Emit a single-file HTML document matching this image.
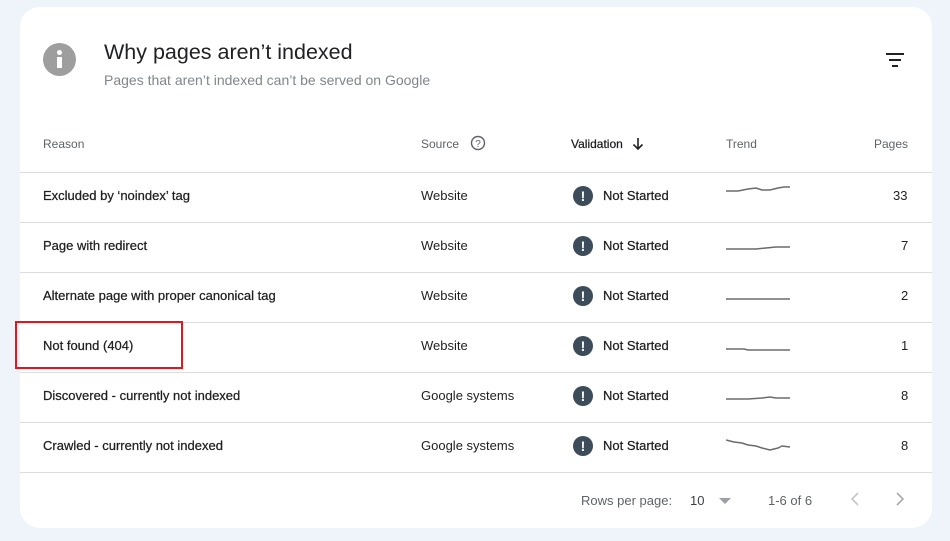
<!DOCTYPE html>
<html><head><style>
body{margin:0;width:950px;height:541px;background:#eff3fa;font-family:"Liberation Sans",Arial,sans-serif;position:relative;overflow:hidden}
.card{position:absolute;left:20px;top:7px;width:912px;height:521px;background:#fff;border-radius:20px}
.a{position:absolute;white-space:nowrap}
.t{font-size:13px;color:#1f1f1f;-webkit-text-stroke:0.25px #1f1f1f}
.h{font-size:12px;color:#5f6368}
.line{position:absolute;left:20px;width:912px;height:1px;background:#dadce0}
.ex{position:absolute;width:20px;height:20px;border-radius:50%;background:#3c4c5a;color:#fff;font-weight:bold;font-size:14px;text-align:center;line-height:20px}
</style></head><body>
<div class="card"></div>
<div class="a" style="left:43px;top:43px;width:33px;height:33px;border-radius:50%;background:#9e9e9e"></div>
<div class="a" style="left:57px;top:50px;width:5px;height:5px;background:#fff;border-radius:50%"></div>
<div class="a" style="left:57px;top:57px;width:5px;height:11px;background:#fff"></div>
<div class="a" style="left:104px;top:40px;font-size:21.5px;color:#202124">Why pages aren’t indexed</div>
<div class="a" style="left:104px;top:72px;font-size:14px;color:#80868b">Pages that aren’t indexed can’t be served on Google</div>
<svg class="a" style="left:885px;top:52px" width="20" height="16"><path d="M1 2h18M4 8h12M7 14h6" stroke="#202124" stroke-width="2"/></svg>
<div class="a h" style="left:43px;top:137px">Reason</div>
<div class="a h" style="left:421px;top:137px">Source</div>
<svg class="a" style="left:470px;top:135px" width="16" height="16"><circle cx="8" cy="8" r="6.5" fill="none" stroke="#5f6368" stroke-width="1.4"/><text x="8" y="12" font-size="10" text-anchor="middle" fill="#5f6368" font-family="Liberation Sans">?</text></svg>
<div class="a" style="left:571px;top:137px;font-size:12px;color:#202124;-webkit-text-stroke:0.25px #202124">Validation</div>
<svg class="a" style="left:632px;top:137px" width="12" height="14"><path d="M6 1v11M1.5 7.5L6 12l4.5-4.5" fill="none" stroke="#202124" stroke-width="1.6"/></svg>
<div class="a h" style="left:726px;top:137px">Trend</div>
<div class="a h" style="left:874px;top:137px">Pages</div>
<div class="line" style="top:172px"></div>
<div class="line" style="top:222px"></div>
<div class="line" style="top:272px"></div>
<div class="line" style="top:322px"></div>
<div class="line" style="top:372px"></div>
<div class="line" style="top:422px"></div>
<div class="line" style="top:472px"></div>

<div class="a t" style="left:43px;top:188px">Excluded by ‘noindex’ tag</div>
<div class="a t" style="left:43px;top:238px">Page with redirect</div>
<div class="a t" style="left:43px;top:288px">Alternate page with proper canonical tag</div>
<div class="a t" style="left:43px;top:338px">Not found (404)</div>
<div class="a t" style="left:43px;top:388px">Discovered - currently not indexed</div>
<div class="a t" style="left:43px;top:438px">Crawled - currently not indexed</div>

<div class="a t" style="left:421px;top:188px;-webkit-text-stroke:0">Website</div>
<div class="a t" style="left:421px;top:238px;-webkit-text-stroke:0">Website</div>
<div class="a t" style="left:421px;top:288px;-webkit-text-stroke:0">Website</div>
<div class="a t" style="left:421px;top:338px;-webkit-text-stroke:0">Website</div>
<div class="a t" style="left:421px;top:388px;-webkit-text-stroke:0">Google systems</div>
<div class="a t" style="left:421px;top:438px;-webkit-text-stroke:0">Google systems</div>

<div class="ex" style="left:573px;top:186px">!</div><div class="a t" style="left:603px;top:188px">Not Started</div>
<div class="ex" style="left:573px;top:236px">!</div><div class="a t" style="left:603px;top:238px">Not Started</div>
<div class="ex" style="left:573px;top:286px">!</div><div class="a t" style="left:603px;top:288px">Not Started</div>
<div class="ex" style="left:573px;top:336px">!</div><div class="a t" style="left:603px;top:338px">Not Started</div>
<div class="ex" style="left:573px;top:386px">!</div><div class="a t" style="left:603px;top:388px">Not Started</div>
<div class="ex" style="left:573px;top:436px">!</div><div class="a t" style="left:603px;top:438px">Not Started</div>

<svg class="a" style="left:726px;top:180px" width="65" height="280" fill="none" stroke="#6b6b6b" stroke-width="1.5">
<path d="M0 11 L12 11 L22 9 L30 8 L36 10 L44 10 L52 8 L58 7 L64 7"/>
<path d="M0 69 L30 69 L40 68 L50 67 L64 67"/>
<path d="M0 119 L64 119"/>
<path d="M0 169 L18 169 L22 170 L64 170"/>
<path d="M0 219 L22 219 L36 218 L44 217 L50 218 L64 218"/>
<path d="M0 260 L8 262 L16 263 L22 265 L30 266 L36 268 L44 270 L52 268 L56 266 L64 267"/>
</svg>

<div class="a t" style="left:893px;top:188px;-webkit-text-stroke:0">33</div>
<div class="a t" style="left:901px;top:238px;-webkit-text-stroke:0">7</div>
<div class="a t" style="left:901px;top:288px;-webkit-text-stroke:0">2</div>
<div class="a t" style="left:901px;top:338px;-webkit-text-stroke:0">1</div>
<div class="a t" style="left:901px;top:388px;-webkit-text-stroke:0">8</div>
<div class="a t" style="left:901px;top:438px;-webkit-text-stroke:0">8</div>

<div class="a" style="left:15px;top:321px;width:164px;height:44px;border:2px solid #e8141b"></div>

<div class="a h" style="left:581px;top:493px;font-size:13px">Rows per page:</div>
<div class="a h" style="left:690px;top:493px;font-size:13px;color:#3c4043">10</div>
<svg class="a" style="left:718px;top:497px" width="14" height="8"><path d="M1 1h12L7 7z" fill="#9aa0a6"/></svg>
<div class="a h" style="left:768px;top:493px;font-size:13px">1-6 of 6</div>
<svg class="a" style="left:850px;top:492px" width="10" height="14"><path d="M8 1L2 7l6 6" fill="none" stroke="#c4c7c5" stroke-width="1.6"/></svg>
<svg class="a" style="left:895px;top:492px" width="10" height="14"><path d="M2 1l6 6-6 6" fill="none" stroke="#a8abad" stroke-width="1.6"/></svg>
</body></html>
